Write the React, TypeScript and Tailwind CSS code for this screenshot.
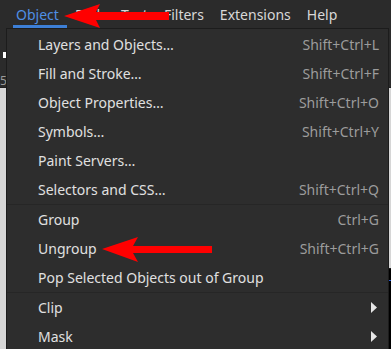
import { Fragment } from "react";

type MenuItem = {
  label: string;
  shortcut?: string;
  submenu?: boolean;
  separatorAfter?: boolean;
};

const menuBar = ["Path", "Text", "Filters", "Extensions", "Help"];

const items: MenuItem[] = [
  { label: "Layers and Objects…", shortcut: "Shift+Ctrl+L" },
  { label: "Fill and Stroke…", shortcut: "Shift+Ctrl+F" },
  { label: "Object Properties…", shortcut: "Shift+Ctrl+O" },
  { label: "Symbols…", shortcut: "Shift+Ctrl+Y" },
  { label: "Paint Servers…" },
  { label: "Selectors and CSS…", shortcut: "Shift+Ctrl+Q", separatorAfter: true },
  { label: "Group", shortcut: "Ctrl+G" },
  { label: "Ungroup", shortcut: "Shift+Ctrl+G" },
  { label: "Pop Selected Objects out of Group", separatorAfter: true },
  { label: "Clip", submenu: true },
  { label: "Mask", submenu: true },
];

export default function App() {
  return (
    <div
      className="relative flex h-[349px] w-[391px] flex-col overflow-hidden bg-[#2b2b2b] text-[14px]"
      style={{ fontFamily: '"Noto Sans", "Open Sans", sans-serif' }}
    >
      <div className="flex h-[28px] shrink-0 items-center pl-[13px]">
        <div className="flex h-full w-[54px] items-center border-b-[3px] border-[#3d7fd6] pl-[3px] pt-[3px] text-[#4f8fe3]">
          Object
        </div>
        {menuBar.map((name) => (
          <div key={name} className="flex h-full items-center px-[8px] text-[#d8d8d8]">
            {name}
          </div>
        ))}
      </div>

      {/* workspace behind the menu */}
      <div className="relative h-[60px] shrink-0 border-b border-[#1f1f1f] bg-[#2b2b2b]">
        <div className="absolute left-[3px] top-[24px] h-[6px] w-[4px] bg-white" />
        <div className="absolute left-0 top-[44px] text-[12px] text-[#9a9a9a]">5C</div>
      </div>
      <div className="flex flex-1 flex-col bg-[#d6d6d6]">
        <div className="flex-1" />
        <div className="flex h-[81px] justify-end">
          <div className="w-[3px] border-t border-[#1a1a1a] bg-black">
            <div className="mt-[11px] h-px bg-[#2a5bd6]" />
          </div>
        </div>
      </div>

      {/* Object menu dropdown */}
      <div className="absolute left-[6px] top-[28px] w-[383px] border border-[#1c1c1c] bg-[#2d2d2d] pt-[1px]">
        {items.map((item) => (
          <Fragment key={item.label}>
            <div className="flex h-[29px] items-center justify-between pl-[31px] pr-[9px]">
              <span className="text-[#e0e0e0]">{item.label}</span>
              {item.shortcut ? <span className="text-[#9c9c9c]">{item.shortcut}</span> : null}
              {item.submenu ? (
                <svg width="6" height="11" viewBox="0 0 6 11" className="mr-[2px]">
                  <path d="M0 0 L6 5.5 L0 11 Z" fill="#e6e6e6" />
                </svg>
              ) : null}
            </div>
            {item.separatorAfter ? <div className="h-px bg-[#262626]" /> : null}
          </Fragment>
        ))}
      </div>

      {/* red annotation arrows */}
      <svg className="absolute left-0 top-0" width="391" height="349" viewBox="0 0 391 349">
        <polygon points="64,16 100,4 96,12 169,12 169,20 96,20 100,28" fill="#ff0000" />
        <polygon points="102,249 138,237 133,246 212,246 212,253 133,253 138,262" fill="#ff0000" />
      </svg>
    </div>
  );
}
